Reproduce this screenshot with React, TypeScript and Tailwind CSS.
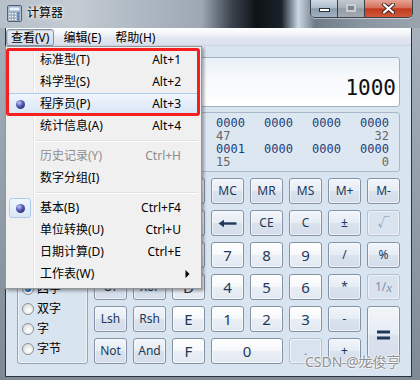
import React from "react";

const sans = "font-['Noto_Sans','Noto_Sans_CJK_SC',sans-serif]";
const mono = "font-['DejaVu_Sans_Mono',monospace]";

type Kind = "op" | "num" | "dis";

function Btn({
  children,
  kind = "op",
  big = false,
  className = "",
}: {
  children?: React.ReactNode;
  kind?: Kind;
  big?: boolean;
  className?: string;
}) {
  const k =
    kind === "num"
      ? "border-[#8592a5] bg-[linear-gradient(180deg,#ffffff_0%,#f6f8fb_48%,#e9eef5_52%,#e4eaf2_100%)] text-[#1e395b]"
      : kind === "op"
      ? "border-[#8592a5] bg-[linear-gradient(180deg,#f2f5f9_0%,#e7edf5_48%,#d9e2ed_52%,#d4deea_100%)] text-[#1e395b]"
      : "border-[#b5c1cf] bg-[#d9e3ef] text-[#7f92ab]";
  const size = big ? "text-[15px]" : "text-[12px]";
  return (
    <div
      className={`flex items-center justify-center rounded-[3px] border ${k} ${size} leading-none shadow-[inset_0_0_0_1px_rgba(255,255,255,0.55)] ${className}`}
    >
      {children}
    </div>
  );
}

function Radio({ checked = false }: { checked?: boolean }) {
  return (
    <div className="w-[12px] h-[12px] shrink-0 rounded-full border border-[#8a9096] bg-[radial-gradient(circle_at_60%_65%,#ffffff_0%,#f1f1f1_35%,#cfd2d5_100%)] flex items-center justify-center">
      {checked && (
        <div className="w-[6px] h-[6px] rounded-full bg-[radial-gradient(circle_at_40%_35%,#9ad6ff_0%,#1f72c8_55%,#0a3d84_100%)]" />
      )}
    </div>
  );
}

function Bullet() {
  return (
    <div className="w-[9px] h-[9px] rounded-full bg-[radial-gradient(circle_at_35%_30%,#c3c9f5_0%,#4d55ad_45%,#1b2066_100%)]" />
  );
}

type Item =
  | "sep"
  | {
      t: string;
      k?: string;
      bullet?: boolean;
      hl?: boolean;
      box?: boolean;
      dis?: boolean;
      sub?: boolean;
    };

const items: Item[] = [
  { t: "标准型(T)", k: "Alt+1" },
  { t: "科学型(S)", k: "Alt+2" },
  { t: "程序员(P)", k: "Alt+3", bullet: true, hl: true },
  { t: "统计信息(A)", k: "Alt+4" },
  "sep",
  { t: "历史记录(Y)", k: "Ctrl+H", dis: true },
  { t: "数字分组(I)" },
  "sep",
  { t: "基本(B)", k: "Ctrl+F4", bullet: true, box: true },
  { t: "单位转换(U)", k: "Ctrl+U" },
  { t: "日期计算(D)", k: "Ctrl+E" },
  { t: "工作表(W)", sub: true },
];

function CalcIcon() {
  return (
    <svg width="15" height="17" viewBox="0 0 15 17">
      <rect x="0.5" y="0.5" width="14" height="16" rx="1.5" fill="#b9c8d8" stroke="#4f6276" />
      <rect x="2" y="2" width="11" height="4" fill="#e4f2ff" stroke="#6f86a0" strokeWidth="0.6" />
      {[0, 1, 2].map((r) =>
        [0, 1, 2, 3].map((c) => (
          <rect
            key={`${r}-${c}`}
            x={2 + c * 2.8}
            y={7.5 + r * 2.9}
            width="2"
            height="2"
            fill={c === 3 ? "#3f6fb0" : "#ffffff"}
            stroke="#6a7f96"
            strokeWidth="0.4"
          />
        ))
      )}
    </svg>
  );
}

const bitsTop = ["0000", "0000", "0000", "0000"];
const bitsBot = ["0001", "0000", "0000", "0000"];

export default function App() {
  return (
    <div className={`relative w-[420px] h-[380px] overflow-hidden bg-[linear-gradient(180deg,#a9b4bf,#7e8993)] ${sans}`}>
      {/* Title bar */}
      <div className="h-[28px] flex items-center pl-[7px] bg-[linear-gradient(90deg,#b6c0ca_0%,#c3cbd3_18%,#aeb8c2_34%,#9da8b3_48%,#3c4550_55%,#0f1317_61%,#1a2129_67%,#cbd8e6_71%,#6f7b87_75%,#8995a1_86%,#9ba4ad_100%)]">
        <div className="mt-[-2px]">
          <CalcIcon />
        </div>
        <div className="ml-[5px] mt-[-3px] text-[12px] text-black [text-shadow:0_0_6px_#fff,0_0_3px_#fff]">计算器</div>
        <div className="ml-auto mr-[7px] self-start flex h-[18px] rounded-b-[5px] border border-t-0 border-[#39424c] overflow-hidden shadow-[0_1px_0_rgba(255,255,255,0.45)]">
          <div className="w-[27px] border-r border-[#39424c] bg-[linear-gradient(180deg,#cfd9e3_0%,#aebccb_45%,#8a9bac_52%,#a3b3c3_100%)] flex justify-center pt-[8px]">
            <div className="w-[11px] h-[4px] bg-white border border-[#2c3038]" />
          </div>
          <div className="w-[27px] border-r border-[#39424c] bg-[linear-gradient(180deg,#c3c8ce_0%,#a9b0b8_45%,#939ba4_52%,#a3aab2_100%)] flex justify-center pt-[4px]">
            <div className="w-[10px] h-[8px] border-[2px] border-[#c9ced4] bg-[#7d858e]" />
          </div>
          <div className="w-[47px] bg-[linear-gradient(180deg,#e6a595_0%,#d4705a_45%,#c23a1d_52%,#d0583a_100%)] flex justify-center pt-[3px]">
            <svg width="13" height="11" viewBox="0 0 13 11">
              <path d="M2 1.5 L11 9.5 M11 1.5 L2 9.5" stroke="#3a2a28" strokeWidth="4" strokeLinecap="round" />
              <path d="M2 1.5 L11 9.5 M11 1.5 L2 9.5" stroke="#ffffff" strokeWidth="2.2" strokeLinecap="round" />
            </svg>
          </div>
        </div>
      </div>

      {/* Client */}
      <div className="ml-[5px] w-[407px] h-[349px] border-x border-b border-[#2d333a] bg-[#d9e4f1] flex flex-col">
        {/* Menu bar */}
        <div className="h-[18px] flex items-start pt-[1px] gap-[4px] text-[12px] text-black bg-[linear-gradient(180deg,#ffffff_0%,#f4f6fa_30%,#e2e7f0_60%,#dae0eb_100%)] border-b border-[#d0d7e2]">
          <div className="h-[17px] px-[4px] border border-[#8294ab] rounded-[3px] bg-[linear-gradient(180deg,#e9eef5,#cfd9e6)] shadow-[inset_1px_1px_1px_rgba(0,0,0,0.15)] flex items-center leading-none">
            查看(V)
          </div>
          <div className="h-[17px] px-[5px] flex items-center leading-none">编辑(E)</div>
          <div className="h-[17px] px-[5px] flex items-center leading-none">帮助(H)</div>
        </div>

        {/* Content */}
        <div className="flex-1 px-[11px] pt-[11px] flex flex-col">
          {/* Display */}
          <div className="h-[50px] rounded-[3px] border border-[#a2b0c3] bg-[linear-gradient(180deg,#ebf1f9_0%,#f7f9fc_45%,#ffffff_100%)] flex items-end justify-end pr-[3px] pb-[6px]">
            <div className={`${mono} text-[21px] leading-[24px] text-[#111]`}>1000</div>
          </div>
          {/* Binary panel (left half lies under the open menu) */}
          <div className={`mt-[5px] h-[60px] rounded-[3px] border border-[#a9b7c9] bg-[#dde7f2] pl-[198px] pt-[4px] ${mono} text-[12px] leading-[13px]`}>
            <div className="grid grid-cols-[repeat(4,29px)] gap-x-[19px]">
              {bitsTop.map((b, i) => (
                <div key={`a${i}`} className="text-[#1d3f7a]">{b}</div>
              ))}
              <div className="text-[#666]">47</div>
              <div />
              <div />
              <div className="text-[#666] text-right">32</div>
              {bitsBot.map((b, i) => (
                <div key={`b${i}`} className="text-[#1d3f7a]">{b}</div>
              ))}
              <div className="text-[#666]">15</div>
              <div />
              <div />
              <div className="text-[#666] text-right">0</div>
            </div>
          </div>

          {/* Bottom: radios + buttons */}
          <div className="mt-[6px] flex gap-[6px]">
            <div className="w-[71px] flex flex-col gap-[6px]">
              <div className="h-[93px] rounded-[3px] border border-[#95a3b6] shadow-[inset_0_0_0_1px_rgba(255,255,255,0.5)]" />
              <div className="h-[87px] rounded-[3px] border border-[#95a3b6] shadow-[inset_0_0_0_1px_rgba(255,255,255,0.5)] pl-[4px] pt-[1px] text-[12px] text-black">
                {["四字", "双字", "字", "字节"].map((t, i) => (
                  <div key={t} className="h-[20px] flex items-center gap-[3px]">
                    <Radio checked={i === 0} />
                    <span>{t}</span>
                  </div>
                ))}
              </div>
            </div>

            <div className="grid grid-cols-[repeat(8,33px)] grid-rows-[repeat(6,26px)] gap-[6px]">
              {/* row 0 (first three lie under the menu) */}
              <Btn kind="dis" />
              <Btn />
              <Btn kind="num" />
              <Btn>MC</Btn>
              <Btn>MR</Btn>
              <Btn>MS</Btn>
              <Btn>M+</Btn>
              <Btn>M-</Btn>
              {/* row 1 */}
              <Btn />
              <Btn />
              <Btn kind="num" />
              <Btn>
                <svg width="19" height="9" viewBox="0 0 19 9">
                  <path d="M5 4.5 H18.5" stroke="#1e395b" strokeWidth="2.4" />
                  <path d="M0.5 4.5 L6 0.8 L6 8.2 Z" fill="#1e395b" />
                </svg>
              </Btn>
              <Btn>CE</Btn>
              <Btn>C</Btn>
              <Btn>±</Btn>
              <Btn kind="dis">√</Btn>
              {/* row 2 */}
              <Btn />
              <Btn />
              <Btn kind="num" />
              <Btn kind="num" big>7</Btn>
              <Btn kind="num" big>8</Btn>
              <Btn kind="num" big>9</Btn>
              <Btn>/</Btn>
              <Btn>%</Btn>
              {/* row 3 */}
              <Btn>Or</Btn>
              <Btn>Xor</Btn>
              <Btn kind="num" big>D</Btn>
              <Btn kind="num" big>4</Btn>
              <Btn kind="num" big>5</Btn>
              <Btn kind="num" big>6</Btn>
              <Btn>*</Btn>
              <Btn kind="dis">
                1/<i className="font-['Liberation_Serif',serif] text-[13px]">x</i>
              </Btn>
              {/* row 4 */}
              <Btn>Lsh</Btn>
              <Btn>Rsh</Btn>
              <Btn kind="num" big>E</Btn>
              <Btn kind="num" big>1</Btn>
              <Btn kind="num" big>2</Btn>
              <Btn kind="num" big>3</Btn>
              <Btn>-</Btn>
              <Btn className="row-span-2">
                <svg width="13" height="10" viewBox="0 0 13 10">
                  <rect x="0" y="0.5" width="13" height="3" fill="#1e395b" />
                  <rect x="0" y="6.5" width="13" height="3" fill="#1e395b" />
                </svg>
              </Btn>
              {/* row 5 */}
              <Btn>Not</Btn>
              <Btn>And</Btn>
              <Btn kind="num" big>F</Btn>
              <Btn kind="num" big className="col-span-2">0</Btn>
              <Btn kind="dis">.</Btn>
              <Btn>+</Btn>
            </div>
          </div>
        </div>
      </div>

      {/* Dropdown menu (overlay) */}
      <div className="absolute left-[5px] top-[46px] w-[197px] border border-[#979797] bg-[#f0f0f0] px-[2px] pt-[2px] pb-[3px] shadow-[2px_2px_3px_rgba(0,0,0,0.35)] text-[12px] text-black">
        <div className="absolute left-[27px] top-[2px] bottom-[2px] w-[2px] border-l border-[#e2e3e3] border-r border-r-white" />
        {items.map((it, i) =>
          it === "sep" ? (
            <div key={i} className="relative h-[8px] flex flex-col justify-center pl-[27px] pr-[1px]">
              <div className="h-px bg-[#e0e0e0]" />
              <div className="h-px bg-white" />
            </div>
          ) : (
            <div
              key={i}
              className={`relative h-[22px] flex items-center ${
                it.hl
                  ? "rounded-[3px] border border-[#aecbef] bg-[linear-gradient(180deg,#f1f6fd_0%,#e4edf9_50%,#d9e5f6_100%)]"
                  : "border border-transparent"
              } ${it.dis ? "text-[#8d8d8d]" : ""}`}
            >
              <div
                className={`w-[22px] h-[20px] flex items-center justify-center ${
                  it.box ? "rounded-[3px] border border-[#aecbef] bg-[linear-gradient(180deg,#f1f6fd,#dbe7f7)]" : ""
                }`}
              >
                {it.bullet && <Bullet />}
              </div>
              <span className="ml-[9px] leading-none">{it.t}</span>
              {it.k && <span className="ml-auto mr-[17px] leading-none">{it.k}</span>}
              {it.sub && (
                <svg className="ml-auto mr-[8px]" width="5" height="8" viewBox="0 0 5 8">
                  <path d="M0.5 0 L4.5 4 L0.5 8 Z" fill="#000" />
                </svg>
              )}
            </div>
          )
        )}
      </div>

      {/* Red annotation rectangle */}
      <div className="absolute left-[6px] top-[48px] w-[194px] h-[68px] border-[3px] border-[#f51f1f] rounded-[3px]" />

      {/* Watermark */}
      <div className="absolute left-[305px] top-[352px] text-[14px] leading-[20px] text-[#8e8e8e] [text-shadow:0_0_2px_#fff,0_0_2px_#fff,0_0_1px_#fff]">
        CSDN @龙俊亨
      </div>
    </div>
  );
}
